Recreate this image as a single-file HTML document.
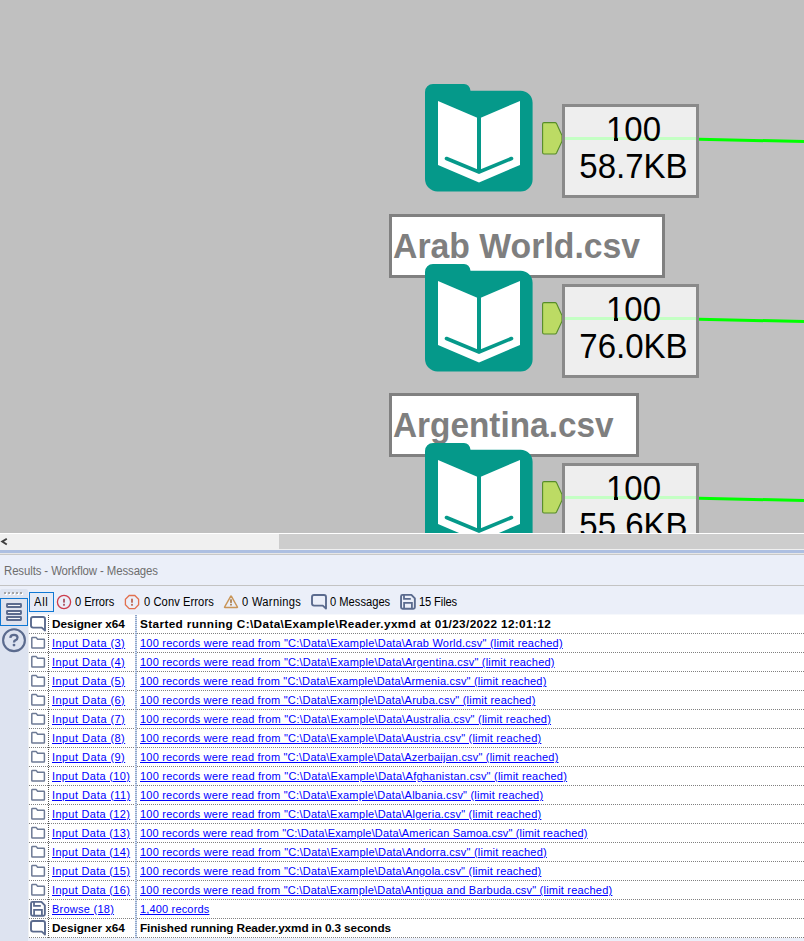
<!DOCTYPE html>
<html><head><meta charset="utf-8">
<style>
html,body{margin:0;padding:0;}
body{width:804px;height:941px;overflow:hidden;position:relative;background:#ebeff9;font-family:"Liberation Sans",sans-serif;}
.abs{position:absolute;}
#canvas{position:absolute;left:0;top:0;width:804px;height:533px;background:#c0c0c0;overflow:hidden;}
.grp{position:absolute;left:0;width:804px;height:300px;}
.box{position:absolute;left:562px;top:104px;width:131px;height:88px;border:3px solid #8a8a8a;background:#eeeeee;}
.boxtxt{position:absolute;left:565px;width:137px;text-align:center;font-size:34.5px;transform:scaleX(0.957);transform-origin:68.5px 0;color:#000;line-height:40px;white-space:nowrap;}
.lbl{position:absolute;left:389px;top:214px;height:58px;border:3px solid #808080;background:#fff;}
.t{position:absolute;white-space:nowrap;line-height:1;}
.lbltxt{position:absolute;left:393px;font-weight:bold;font-size:35px;transform-origin:0 0;color:#7f7f7f;white-space:nowrap;line-height:40px;}
</style></head>
<body>
<div id="canvas">
<div class="grp" style="top:0px">
<svg class="abs" style="left:425px;top:84px" width="110" height="110" viewBox="0 0 110 110">
<path d="M0,8 A8,8 0 0 1 8,0 L39,0 Q44.5,0 45.5,6.8 L95.6,6.8 A12,12 0 0 1 107.6,18.8 L107.6,95.5 A12,12 0 0 1 95.6,107.5 L12.5,107.5 A12.5,12.5 0 0 1 0,95 Z" fill="#05998a"/>
<path d="M13,17 L54,34.5 L95,17 L95,81 L54,98.5 L13,81 Z" fill="#fff"/>
<rect x="52" y="30" width="4" height="58" fill="#05998a"/>
<path d="M21.5,74.5 L54,88 L86.5,74.5" fill="none" stroke="#05998a" stroke-width="3.6" stroke-linecap="round"/>
</svg>
<svg class="abs" style="left:540px;top:120px" width="26" height="38"><path d="M4,2.6 L15,2.6 Q16,2.6 16.5,3.5 L22,15.6 L22,21.2 L16.5,33.1 Q16,34 15,34 L4,34 Q2.6,34 2.6,32.6 L2.6,4 Q2.6,2.6 4,2.6 Z" fill="#bcdb64" stroke="#558c28" stroke-width="1.1" stroke-linejoin="round"/></svg>
<div class="box"></div>
<div class="abs" style="left:565px;top:137px;width:131px;height:3px;background:#c4ffc4"></div>
<svg class="abs" style="left:699px;top:130px" width="105" height="20"><path d="M0,9.3 L105,11.5" stroke="#00ff00" stroke-width="3" fill="none"/></svg>
<div class="boxtxt" style="top:109px">100</div>
<div class="boxtxt" style="top:146px">58.7KB</div>
<div class="abs" style="left:607px;top:138px;width:7px;height:2px;background:#c4ffc4"></div>
<div class="abs" style="left:607px;top:140px;width:7px;height:1px;background:#eeeeee"></div>
<div class="abs" style="left:618px;top:138px;width:6px;height:2px;background:#c4ffc4"></div>
<div class="abs" style="left:618px;top:140px;width:6px;height:1px;background:#eeeeee"></div>
</div>
<div class="grp" style="top:0px">
<div class="lbl" style="width:270px"></div>
<div class="lbltxt" style="top:226px;transform:scaleX(0.965)">Arab World.csv</div>
</div>
<div class="grp" style="top:180px">
<svg class="abs" style="left:425px;top:84px" width="110" height="110" viewBox="0 0 110 110">
<path d="M0,8 A8,8 0 0 1 8,0 L39,0 Q44.5,0 45.5,6.8 L95.6,6.8 A12,12 0 0 1 107.6,18.8 L107.6,95.5 A12,12 0 0 1 95.6,107.5 L12.5,107.5 A12.5,12.5 0 0 1 0,95 Z" fill="#05998a"/>
<path d="M13,17 L54,34.5 L95,17 L95,81 L54,98.5 L13,81 Z" fill="#fff"/>
<rect x="52" y="30" width="4" height="58" fill="#05998a"/>
<path d="M21.5,74.5 L54,88 L86.5,74.5" fill="none" stroke="#05998a" stroke-width="3.6" stroke-linecap="round"/>
</svg>
<svg class="abs" style="left:540px;top:120px" width="26" height="38"><path d="M4,2.6 L15,2.6 Q16,2.6 16.5,3.5 L22,15.6 L22,21.2 L16.5,33.1 Q16,34 15,34 L4,34 Q2.6,34 2.6,32.6 L2.6,4 Q2.6,2.6 4,2.6 Z" fill="#bcdb64" stroke="#558c28" stroke-width="1.1" stroke-linejoin="round"/></svg>
<div class="box"></div>
<div class="abs" style="left:565px;top:137px;width:131px;height:3px;background:#c4ffc4"></div>
<svg class="abs" style="left:699px;top:130px" width="105" height="20"><path d="M0,9.3 L105,11.5" stroke="#00ff00" stroke-width="3" fill="none"/></svg>
<div class="boxtxt" style="top:109px">100</div>
<div class="boxtxt" style="top:146px">76.0KB</div>
<div class="abs" style="left:607px;top:138px;width:7px;height:2px;background:#c4ffc4"></div>
<div class="abs" style="left:607px;top:140px;width:7px;height:1px;background:#eeeeee"></div>
<div class="abs" style="left:618px;top:138px;width:6px;height:2px;background:#c4ffc4"></div>
<div class="abs" style="left:618px;top:140px;width:6px;height:1px;background:#eeeeee"></div>
</div>
<div class="grp" style="top:179px">
<div class="lbl" style="width:244px"></div>
<div class="lbltxt" style="top:226px;transform:scaleX(0.953)">Argentina.csv</div>
</div>
<div class="grp" style="top:359px">
<svg class="abs" style="left:425px;top:84px" width="110" height="110" viewBox="0 0 110 110">
<path d="M0,8 A8,8 0 0 1 8,0 L39,0 Q44.5,0 45.5,6.8 L95.6,6.8 A12,12 0 0 1 107.6,18.8 L107.6,95.5 A12,12 0 0 1 95.6,107.5 L12.5,107.5 A12.5,12.5 0 0 1 0,95 Z" fill="#05998a"/>
<path d="M13,17 L54,34.5 L95,17 L95,81 L54,98.5 L13,81 Z" fill="#fff"/>
<rect x="52" y="30" width="4" height="58" fill="#05998a"/>
<path d="M21.5,74.5 L54,88 L86.5,74.5" fill="none" stroke="#05998a" stroke-width="3.6" stroke-linecap="round"/>
</svg>
<svg class="abs" style="left:540px;top:120px" width="26" height="38"><path d="M4,2.6 L15,2.6 Q16,2.6 16.5,3.5 L22,15.6 L22,21.2 L16.5,33.1 Q16,34 15,34 L4,34 Q2.6,34 2.6,32.6 L2.6,4 Q2.6,2.6 4,2.6 Z" fill="#bcdb64" stroke="#558c28" stroke-width="1.1" stroke-linejoin="round"/></svg>
<div class="box"></div>
<div class="abs" style="left:565px;top:137px;width:131px;height:3px;background:#c4ffc4"></div>
<svg class="abs" style="left:699px;top:130px" width="105" height="20"><path d="M0,9.3 L105,11.5" stroke="#00ff00" stroke-width="3" fill="none"/></svg>
<div class="boxtxt" style="top:109px">100</div>
<div class="boxtxt" style="top:146px">55.6KB</div>
<div class="abs" style="left:607px;top:138px;width:7px;height:2px;background:#c4ffc4"></div>
<div class="abs" style="left:607px;top:140px;width:7px;height:1px;background:#eeeeee"></div>
<div class="abs" style="left:618px;top:138px;width:6px;height:2px;background:#c4ffc4"></div>
<div class="abs" style="left:618px;top:140px;width:6px;height:1px;background:#eeeeee"></div>
</div>
<div class="grp" style="top:358px">
<div class="lbl" style="width:246px"></div>
<div class="lbltxt" style="top:226px;transform:scaleX(0.96)"></div>
</div>
</div>

<!-- scrollbar -->
<div class="abs" style="left:0;top:533px;width:804px;height:1px;background:#fff"></div>
<div class="abs" style="left:0;top:534px;width:804px;height:16px;background:#f0f0f0"></div>
<div class="abs" style="left:279px;top:534px;width:525px;height:15px;background:#cdcdcd"></div>
<svg class="abs" style="left:0;top:534px" width="12" height="16"><path d="M6.8,4.7 L2.2,7.6 L6.8,10.5" fill="none" stroke="#404040" stroke-width="1.9"/></svg>
<div class="abs" style="left:0;top:550px;width:804px;height:3px;background:#adbfe1"></div>
<div class="abs" style="left:0;top:553px;width:804px;height:1px;background:#e6e6e6"></div>
<div class="abs" style="left:0;top:554px;width:804px;height:1px;background:#c8c8c8"></div>
<div class="abs" style="left:0;top:585px;width:804px;height:1px;background:#c3c3c3"></div>
<div class="abs" style="left:0;top:589px;width:28px;height:352px;background:#dde3f0;border-radius:2px 2px 0 0"></div>
<div class="abs" style="left:5px;top:593px;width:2px;height:2px;background:#fff"></div>
<div class="abs" style="left:4px;top:592px;width:2px;height:2px;background:#a4a4a4"></div>
<div class="abs" style="left:9px;top:593px;width:2px;height:2px;background:#fff"></div>
<div class="abs" style="left:8px;top:592px;width:2px;height:2px;background:#a4a4a4"></div>
<div class="abs" style="left:13px;top:593px;width:2px;height:2px;background:#fff"></div>
<div class="abs" style="left:12px;top:592px;width:2px;height:2px;background:#a4a4a4"></div>
<div class="abs" style="left:17px;top:593px;width:2px;height:2px;background:#fff"></div>
<div class="abs" style="left:16px;top:592px;width:2px;height:2px;background:#a4a4a4"></div>
<div class="abs" style="left:21px;top:593px;width:2px;height:2px;background:#fff"></div>
<div class="abs" style="left:20px;top:592px;width:2px;height:2px;background:#a4a4a4"></div>
<div class="abs" style="left:0;top:598px;width:26px;height:26px;border:1px solid #0f78d4;background:#dfe3ee"></div>
<svg class="abs" style="left:0;top:598px" width="28" height="28"><g fill="#f2f4f8" stroke="#5b6b8e" stroke-width="1.9"><rect x="7" y="6" width="14" height="3" rx="0.4"/><rect x="7" y="13" width="14" height="3" rx="0.4"/><rect x="7" y="19" width="14" height="3" rx="0.4"/></g></svg>
<svg class="abs" style="left:0;top:626px" width="28" height="28"><circle cx="14" cy="14.2" r="10.9" fill="none" stroke="#5b6b8e" stroke-width="2.1"/><path d="M10.3,11.9 Q10.5,8.8 14,8.8 Q17.5,8.8 17.5,11.6 Q17.5,13.4 15.6,14.2 Q14,14.8 14,16.5" fill="none" stroke="#5b6b8e" stroke-width="2.3"/><circle cx="14" cy="19.1" r="1.4" fill="#5b6b8e"/></svg>
<div class="abs" style="left:29px;top:592px;width:23px;height:18px;border:1px solid #0f78d4;background:#e6ebf6"></div>
<div class="t" style="left:4px;top:565px;font-size:12px;color:#6d6d6d;letter-spacing:-0.107px;transform:scaleX(0.95);transform-origin:0 0;">Results - Workflow - Messages</div>
<div class="t" style="left:34px;top:596px;font-size:12px;color:#000;letter-spacing:0.750px;transform:scaleX(0.93);transform-origin:0 0;">All</div>
<svg class="abs" style="left:54px;top:592px" width="20" height="20"><circle cx="10" cy="10" r="6.6" fill="none" stroke="#cc3d4d" stroke-width="1.3"/><rect x="9" y="6.8" width="2" height="3.8" fill="#b0606e"/><rect x="9" y="11.8" width="2" height="1.9" fill="#b0606e"/></svg>
<div class="t" style="left:75px;top:596px;font-size:12px;color:#000;letter-spacing:-0.071px;transform:scaleX(0.93);transform-origin:0 0;">0 Errors</div>
<svg class="abs" style="left:122px;top:592px" width="20" height="20"><path d="M7.2,3.5 L12.8,3.5 L16.6,7.3 L16.6,12.8 L12.8,16.6 L7.2,16.6 L3.4,12.8 L3.4,7.3 Z" fill="none" stroke="#e2704f" stroke-width="1.3"/><rect x="9" y="6.7" width="2" height="4" fill="#c07262"/><rect x="9" y="11.9" width="2" height="1.8" fill="#c07262"/></svg>
<div class="t" style="left:143.5px;top:596px;font-size:12px;color:#000;letter-spacing:0.083px;transform:scaleX(0.93);transform-origin:0 0;">0 Conv Errors</div>
<svg class="abs" style="left:221px;top:592px" width="20" height="20"><path d="M9.8,4.2 Q10,3.6 10.3,4.2 L16.4,15 Q16.6,15.4 16.1,15.4 L3.9,15.4 Q3.4,15.4 3.6,15 Z" fill="none" stroke="#c99558" stroke-width="1.5" stroke-linejoin="round"/><rect x="9" y="7.3" width="2" height="3.6" fill="#b08a62"/><rect x="9" y="11.8" width="2" height="1.7" fill="#b08a62"/></svg>
<div class="t" style="left:242px;top:596px;font-size:12px;color:#000;letter-spacing:0.333px;transform:scaleX(0.93);transform-origin:0 0;">0 Warnings</div>
<svg class="abs" style="left:311px;top:594px" width="18" height="18"><path d="M3,1 L13,1 Q15,1 15,3 L15,14.6 L11.8,11.6 L3,11.6 Q1,11.6 1,9.6 L1,3 Q1,1 3,1 Z" fill="none" stroke="#5b6b8e" stroke-width="1.9" stroke-linejoin="round"/></svg>
<div class="t" style="left:330px;top:596px;font-size:12px;color:#000;letter-spacing:0.000px;transform:scaleX(0.93);transform-origin:0 0;">0 Messages</div>
<svg class="abs" style="left:398px;top:591px" width="20" height="20"><path d="M4.55,3.9 L13.4,3.9 L16.85,7.4 L16.85,16.2 Q16.85,17.7 15.35,17.7 L4.55,17.7 Q3.05,17.7 3.05,16.2 L3.05,5.4 Q3.05,3.9 4.55,3.9 Z" fill="none" stroke="#5b6b8e" stroke-width="1.9" stroke-linejoin="round"/><path d="M6,4 L6,7.85 L12.8,7.85" fill="none" stroke="#5b6b8e" stroke-width="1.8"/><path d="M6.1,17.5 L6.1,11.8 L13.9,11.8 L13.9,17.5" fill="none" stroke="#5b6b8e" stroke-width="1.8"/></svg>
<div class="t" style="left:419px;top:596px;font-size:12px;color:#000;letter-spacing:-0.143px;transform:scaleX(0.93);transform-origin:0 0;">15 Files</div>
<div class="abs" style="left:29px;top:614px;width:775px;height:1px;background:#f6f8fc"></div>
<div class="abs" style="left:29px;top:615px;width:775px;height:323px;background:#fff"></div>
<div class="abs" style="left:28px;top:615px;width:1px;height:323px;background:#eff1f4"></div>
<svg class="abs" style="left:30px;top:616px" width="18" height="18"><path d="M3,1 L13,1 Q15,1 15,3 L15,14.6 L11.8,11.6 L3,11.6 Q1,11.6 1,9.6 L1,3 Q1,1 3,1 Z" fill="none" stroke="#5b6b8e" stroke-width="1.9" stroke-linejoin="round"/></svg>
<div class="t" style="left:52px;top:619px;font-size:11px;color:#000;letter-spacing:-0.045px;font-weight:bold;transform:scaleX(1.07);transform-origin:0 0;">Designer x64</div>
<div class="t" style="left:140px;top:619px;font-size:11px;color:#000;letter-spacing:0.346px;font-weight:bold;transform:scaleX(1.07);transform-origin:0 0;">Started running C:\Data\Example\Reader.yxmd at 01/23/2022 12:01:12</div>
<div class="abs" style="left:29px;top:633px;width:775px;height:1px;background:repeating-linear-gradient(90deg,#808080 0 1px,transparent 1px 2px)"></div>
<svg class="abs" style="left:30px;top:636px" width="17" height="15"><path d="M1.8,2.2 Q1.8,1.6 2.4,1.6 L6.3,1.6 L7.6,3.3 L14,3.3 Q14.4,3.3 14.4,3.9 L14.4,11.4 Q14.4,12 13.9,12 L2.3,12 Q1.8,12 1.8,11.5 Z" fill="none" stroke="#6d7a95" stroke-width="1.5" stroke-linejoin="round"/></svg>
<div class="t" style="left:52px;top:638px;font-size:11px;color:#0000ff;letter-spacing:0.423px;text-decoration:underline;">Input Data (3)</div>
<div class="t" style="left:140px;top:638px;font-size:11px;color:#0000ff;letter-spacing:0.215px;text-decoration:underline;">100 records were read from "C:\Data\Example\Data\Arab World.csv" (limit reached)</div>
<div class="abs" style="left:29px;top:652px;width:775px;height:1px;background:repeating-linear-gradient(90deg,#808080 0 1px,transparent 1px 2px)"></div>
<svg class="abs" style="left:30px;top:655px" width="17" height="15"><path d="M1.8,2.2 Q1.8,1.6 2.4,1.6 L6.3,1.6 L7.6,3.3 L14,3.3 Q14.4,3.3 14.4,3.9 L14.4,11.4 Q14.4,12 13.9,12 L2.3,12 Q1.8,12 1.8,11.5 Z" fill="none" stroke="#6d7a95" stroke-width="1.5" stroke-linejoin="round"/></svg>
<div class="t" style="left:52px;top:657px;font-size:11px;color:#0000ff;letter-spacing:0.423px;text-decoration:underline;">Input Data (4)</div>
<div class="t" style="left:140px;top:657px;font-size:11px;color:#0000ff;letter-spacing:0.213px;text-decoration:underline;">100 records were read from "C:\Data\Example\Data\Argentina.csv" (limit reached)</div>
<div class="abs" style="left:29px;top:671px;width:775px;height:1px;background:repeating-linear-gradient(90deg,#808080 0 1px,transparent 1px 2px)"></div>
<svg class="abs" style="left:30px;top:674px" width="17" height="15"><path d="M1.8,2.2 Q1.8,1.6 2.4,1.6 L6.3,1.6 L7.6,3.3 L14,3.3 Q14.4,3.3 14.4,3.9 L14.4,11.4 Q14.4,12 13.9,12 L2.3,12 Q1.8,12 1.8,11.5 Z" fill="none" stroke="#6d7a95" stroke-width="1.5" stroke-linejoin="round"/></svg>
<div class="t" style="left:52px;top:676px;font-size:11px;color:#0000ff;letter-spacing:0.423px;text-decoration:underline;">Input Data (5)</div>
<div class="t" style="left:140px;top:676px;font-size:11px;color:#0000ff;letter-spacing:0.192px;text-decoration:underline;">100 records were read from "C:\Data\Example\Data\Armenia.csv" (limit reached)</div>
<div class="abs" style="left:29px;top:690px;width:775px;height:1px;background:repeating-linear-gradient(90deg,#808080 0 1px,transparent 1px 2px)"></div>
<svg class="abs" style="left:30px;top:693px" width="17" height="15"><path d="M1.8,2.2 Q1.8,1.6 2.4,1.6 L6.3,1.6 L7.6,3.3 L14,3.3 Q14.4,3.3 14.4,3.9 L14.4,11.4 Q14.4,12 13.9,12 L2.3,12 Q1.8,12 1.8,11.5 Z" fill="none" stroke="#6d7a95" stroke-width="1.5" stroke-linejoin="round"/></svg>
<div class="t" style="left:52px;top:695px;font-size:11px;color:#0000ff;letter-spacing:0.423px;text-decoration:underline;">Input Data (6)</div>
<div class="t" style="left:140px;top:695px;font-size:11px;color:#0000ff;letter-spacing:0.205px;text-decoration:underline;">100 records were read from "C:\Data\Example\Data\Aruba.csv" (limit reached)</div>
<div class="abs" style="left:29px;top:709px;width:775px;height:1px;background:repeating-linear-gradient(90deg,#808080 0 1px,transparent 1px 2px)"></div>
<svg class="abs" style="left:30px;top:712px" width="17" height="15"><path d="M1.8,2.2 Q1.8,1.6 2.4,1.6 L6.3,1.6 L7.6,3.3 L14,3.3 Q14.4,3.3 14.4,3.9 L14.4,11.4 Q14.4,12 13.9,12 L2.3,12 Q1.8,12 1.8,11.5 Z" fill="none" stroke="#6d7a95" stroke-width="1.5" stroke-linejoin="round"/></svg>
<div class="t" style="left:52px;top:714px;font-size:11px;color:#0000ff;letter-spacing:0.423px;text-decoration:underline;">Input Data (7)</div>
<div class="t" style="left:140px;top:714px;font-size:11px;color:#0000ff;letter-spacing:0.221px;text-decoration:underline;">100 records were read from "C:\Data\Example\Data\Australia.csv" (limit reached)</div>
<div class="abs" style="left:29px;top:728px;width:775px;height:1px;background:repeating-linear-gradient(90deg,#808080 0 1px,transparent 1px 2px)"></div>
<svg class="abs" style="left:30px;top:731px" width="17" height="15"><path d="M1.8,2.2 Q1.8,1.6 2.4,1.6 L6.3,1.6 L7.6,3.3 L14,3.3 Q14.4,3.3 14.4,3.9 L14.4,11.4 Q14.4,12 13.9,12 L2.3,12 Q1.8,12 1.8,11.5 Z" fill="none" stroke="#6d7a95" stroke-width="1.5" stroke-linejoin="round"/></svg>
<div class="t" style="left:52px;top:733px;font-size:11px;color:#0000ff;letter-spacing:0.423px;text-decoration:underline;">Input Data (8)</div>
<div class="t" style="left:140px;top:733px;font-size:11px;color:#0000ff;letter-spacing:0.213px;text-decoration:underline;">100 records were read from "C:\Data\Example\Data\Austria.csv" (limit reached)</div>
<div class="abs" style="left:29px;top:747px;width:775px;height:1px;background:repeating-linear-gradient(90deg,#808080 0 1px,transparent 1px 2px)"></div>
<svg class="abs" style="left:30px;top:750px" width="17" height="15"><path d="M1.8,2.2 Q1.8,1.6 2.4,1.6 L6.3,1.6 L7.6,3.3 L14,3.3 Q14.4,3.3 14.4,3.9 L14.4,11.4 Q14.4,12 13.9,12 L2.3,12 Q1.8,12 1.8,11.5 Z" fill="none" stroke="#6d7a95" stroke-width="1.5" stroke-linejoin="round"/></svg>
<div class="t" style="left:52px;top:752px;font-size:11px;color:#0000ff;letter-spacing:0.423px;text-decoration:underline;">Input Data (9)</div>
<div class="t" style="left:140px;top:752px;font-size:11px;color:#0000ff;letter-spacing:0.197px;text-decoration:underline;">100 records were read from "C:\Data\Example\Data\Azerbaijan.csv" (limit reached)</div>
<div class="abs" style="left:29px;top:766px;width:775px;height:1px;background:repeating-linear-gradient(90deg,#808080 0 1px,transparent 1px 2px)"></div>
<svg class="abs" style="left:30px;top:769px" width="17" height="15"><path d="M1.8,2.2 Q1.8,1.6 2.4,1.6 L6.3,1.6 L7.6,3.3 L14,3.3 Q14.4,3.3 14.4,3.9 L14.4,11.4 Q14.4,12 13.9,12 L2.3,12 Q1.8,12 1.8,11.5 Z" fill="none" stroke="#6d7a95" stroke-width="1.5" stroke-linejoin="round"/></svg>
<div class="t" style="left:52px;top:771px;font-size:11px;color:#0000ff;letter-spacing:0.321px;text-decoration:underline;">Input Data (10)</div>
<div class="t" style="left:140px;top:771px;font-size:11px;color:#0000ff;letter-spacing:0.225px;text-decoration:underline;">100 records were read from "C:\Data\Example\Data\Afghanistan.csv" (limit reached)</div>
<div class="abs" style="left:29px;top:785px;width:775px;height:1px;background:repeating-linear-gradient(90deg,#808080 0 1px,transparent 1px 2px)"></div>
<svg class="abs" style="left:30px;top:788px" width="17" height="15"><path d="M1.8,2.2 Q1.8,1.6 2.4,1.6 L6.3,1.6 L7.6,3.3 L14,3.3 Q14.4,3.3 14.4,3.9 L14.4,11.4 Q14.4,12 13.9,12 L2.3,12 Q1.8,12 1.8,11.5 Z" fill="none" stroke="#6d7a95" stroke-width="1.5" stroke-linejoin="round"/></svg>
<div class="t" style="left:52px;top:790px;font-size:11px;color:#0000ff;letter-spacing:0.393px;text-decoration:underline;">Input Data (11)</div>
<div class="t" style="left:140px;top:790px;font-size:11px;color:#0000ff;letter-spacing:0.205px;text-decoration:underline;">100 records were read from "C:\Data\Example\Data\Albania.csv" (limit reached)</div>
<div class="abs" style="left:29px;top:804px;width:775px;height:1px;background:repeating-linear-gradient(90deg,#808080 0 1px,transparent 1px 2px)"></div>
<svg class="abs" style="left:30px;top:807px" width="17" height="15"><path d="M1.8,2.2 Q1.8,1.6 2.4,1.6 L6.3,1.6 L7.6,3.3 L14,3.3 Q14.4,3.3 14.4,3.9 L14.4,11.4 Q14.4,12 13.9,12 L2.3,12 Q1.8,12 1.8,11.5 Z" fill="none" stroke="#6d7a95" stroke-width="1.5" stroke-linejoin="round"/></svg>
<div class="t" style="left:52px;top:809px;font-size:11px;color:#0000ff;letter-spacing:0.321px;text-decoration:underline;">Input Data (12)</div>
<div class="t" style="left:140px;top:809px;font-size:11px;color:#0000ff;letter-spacing:0.213px;text-decoration:underline;">100 records were read from "C:\Data\Example\Data\Algeria.csv" (limit reached)</div>
<div class="abs" style="left:29px;top:823px;width:775px;height:1px;background:repeating-linear-gradient(90deg,#808080 0 1px,transparent 1px 2px)"></div>
<svg class="abs" style="left:30px;top:826px" width="17" height="15"><path d="M1.8,2.2 Q1.8,1.6 2.4,1.6 L6.3,1.6 L7.6,3.3 L14,3.3 Q14.4,3.3 14.4,3.9 L14.4,11.4 Q14.4,12 13.9,12 L2.3,12 Q1.8,12 1.8,11.5 Z" fill="none" stroke="#6d7a95" stroke-width="1.5" stroke-linejoin="round"/></svg>
<div class="t" style="left:52px;top:828px;font-size:11px;color:#0000ff;letter-spacing:0.321px;text-decoration:underline;">Input Data (13)</div>
<div class="t" style="left:140px;top:828px;font-size:11px;color:#0000ff;letter-spacing:0.149px;text-decoration:underline;">100 records were read from "C:\Data\Example\Data\American Samoa.csv" (limit reached)</div>
<div class="abs" style="left:29px;top:842px;width:775px;height:1px;background:repeating-linear-gradient(90deg,#808080 0 1px,transparent 1px 2px)"></div>
<svg class="abs" style="left:30px;top:845px" width="17" height="15"><path d="M1.8,2.2 Q1.8,1.6 2.4,1.6 L6.3,1.6 L7.6,3.3 L14,3.3 Q14.4,3.3 14.4,3.9 L14.4,11.4 Q14.4,12 13.9,12 L2.3,12 Q1.8,12 1.8,11.5 Z" fill="none" stroke="#6d7a95" stroke-width="1.5" stroke-linejoin="round"/></svg>
<div class="t" style="left:52px;top:847px;font-size:11px;color:#0000ff;letter-spacing:0.321px;text-decoration:underline;">Input Data (14)</div>
<div class="t" style="left:140px;top:847px;font-size:11px;color:#0000ff;letter-spacing:0.221px;text-decoration:underline;">100 records were read from "C:\Data\Example\Data\Andorra.csv" (limit reached)</div>
<div class="abs" style="left:29px;top:861px;width:775px;height:1px;background:repeating-linear-gradient(90deg,#808080 0 1px,transparent 1px 2px)"></div>
<svg class="abs" style="left:30px;top:864px" width="17" height="15"><path d="M1.8,2.2 Q1.8,1.6 2.4,1.6 L6.3,1.6 L7.6,3.3 L14,3.3 Q14.4,3.3 14.4,3.9 L14.4,11.4 Q14.4,12 13.9,12 L2.3,12 Q1.8,12 1.8,11.5 Z" fill="none" stroke="#6d7a95" stroke-width="1.5" stroke-linejoin="round"/></svg>
<div class="t" style="left:52px;top:866px;font-size:11px;color:#0000ff;letter-spacing:0.321px;text-decoration:underline;">Input Data (15)</div>
<div class="t" style="left:140px;top:866px;font-size:11px;color:#0000ff;letter-spacing:0.216px;text-decoration:underline;">100 records were read from "C:\Data\Example\Data\Angola.csv" (limit reached)</div>
<div class="abs" style="left:29px;top:880px;width:775px;height:1px;background:repeating-linear-gradient(90deg,#808080 0 1px,transparent 1px 2px)"></div>
<svg class="abs" style="left:30px;top:883px" width="17" height="15"><path d="M1.8,2.2 Q1.8,1.6 2.4,1.6 L6.3,1.6 L7.6,3.3 L14,3.3 Q14.4,3.3 14.4,3.9 L14.4,11.4 Q14.4,12 13.9,12 L2.3,12 Q1.8,12 1.8,11.5 Z" fill="none" stroke="#6d7a95" stroke-width="1.5" stroke-linejoin="round"/></svg>
<div class="t" style="left:52px;top:885px;font-size:11px;color:#0000ff;letter-spacing:0.321px;text-decoration:underline;">Input Data (16)</div>
<div class="t" style="left:140px;top:885px;font-size:11px;color:#0000ff;letter-spacing:0.205px;text-decoration:underline;">100 records were read from "C:\Data\Example\Data\Antigua and Barbuda.csv" (limit reached)</div>
<div class="abs" style="left:29px;top:899px;width:775px;height:1px;background:repeating-linear-gradient(90deg,#808080 0 1px,transparent 1px 2px)"></div>
<svg class="abs" style="left:28px;top:898px" width="20" height="20"><path d="M4.55,3.9 L13.4,3.9 L16.85,7.4 L16.85,16.2 Q16.85,17.7 15.35,17.7 L4.55,17.7 Q3.05,17.7 3.05,16.2 L3.05,5.4 Q3.05,3.9 4.55,3.9 Z" fill="none" stroke="#5b6b8e" stroke-width="1.9" stroke-linejoin="round"/><path d="M6,4 L6,7.85 L12.8,7.85" fill="none" stroke="#5b6b8e" stroke-width="1.8"/><path d="M6.1,17.5 L6.1,11.8 L13.9,11.8 L13.9,17.5" fill="none" stroke="#5b6b8e" stroke-width="1.8"/></svg>
<div class="t" style="left:52px;top:904px;font-size:11px;color:#0000ff;letter-spacing:0.250px;text-decoration:underline;">Browse (18)</div>
<div class="t" style="left:140px;top:904px;font-size:11px;color:#0000ff;letter-spacing:0.167px;text-decoration:underline;">1,400 records</div>
<div class="abs" style="left:29px;top:918px;width:775px;height:1px;background:repeating-linear-gradient(90deg,#808080 0 1px,transparent 1px 2px)"></div>
<svg class="abs" style="left:30px;top:920px" width="18" height="18"><path d="M3,1 L13,1 Q15,1 15,3 L15,14.6 L11.8,11.6 L3,11.6 Q1,11.6 1,9.6 L1,3 Q1,1 3,1 Z" fill="none" stroke="#5b6b8e" stroke-width="1.9" stroke-linejoin="round"/></svg>
<div class="t" style="left:52px;top:923px;font-size:11px;color:#000;letter-spacing:-0.036px;font-weight:bold;transform:scaleX(1.07);transform-origin:0 0;">Designer x64</div>
<div class="t" style="left:140px;top:923px;font-size:11px;color:#000;letter-spacing:-0.119px;font-weight:bold;transform:scaleX(1.07);transform-origin:0 0;">Finished running Reader.yxmd in 0.3 seconds</div>
<div class="abs" style="left:29px;top:937px;width:775px;height:1px;background:repeating-linear-gradient(90deg,#808080 0 1px,transparent 1px 2px)"></div>
<div class="abs" style="left:48px;top:615px;width:1px;height:323px;background:repeating-linear-gradient(180deg,#505050 0 1px,transparent 1px 2px)"></div>
<div class="abs" style="left:135px;top:615px;width:2px;height:323px;background:repeating-linear-gradient(180deg,#8ea6cc 0 1px,#d5dfee 1px 2px)"></div>
</body></html>
